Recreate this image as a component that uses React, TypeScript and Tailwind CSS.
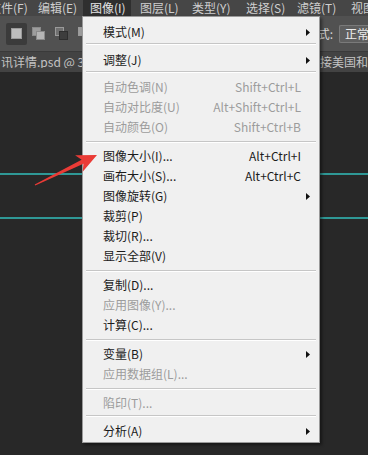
// Photoshop "图像" menu dropped open over the dark workspace, with a red
// pointer arrow marking 图像大小. Menu rows are 20px, separators 7-9px.

type Row =
  | { kind: "item"; label: string; shortcut?: string; sub?: boolean; off?: boolean }
  | { kind: "sep"; cls: string };

const rows: Row[] = [
  { kind: "item", label: "模式(M)", sub: true },
  { kind: "sep", cls: "h-[8px] pt-[1px]" },
  { kind: "item", label: "调整(J)", sub: true },
  { kind: "sep", cls: "h-[7px] pt-[1px]" },
  { kind: "item", label: "自动色调(N)", shortcut: "Shift+Ctrl+L", off: true },
  { kind: "item", label: "自动对比度(U)", shortcut: "Alt+Shift+Ctrl+L", off: true },
  { kind: "item", label: "自动颜色(O)", shortcut: "Shift+Ctrl+B", off: true },
  { kind: "sep", cls: "h-[9px] pt-[4px]" },
  { kind: "item", label: "图像大小(I)...", shortcut: "Alt+Ctrl+I" },
  { kind: "item", label: "画布大小(S)...", shortcut: "Alt+Ctrl+C" },
  { kind: "item", label: "图像旋转(G)", sub: true },
  { kind: "item", label: "裁剪(P)" },
  { kind: "item", label: "裁切(R)..." },
  { kind: "item", label: "显示全部(V)" },
  { kind: "sep", cls: "h-[9px] pt-[4px]" },
  { kind: "item", label: "复制(D)..." },
  { kind: "item", label: "应用图像(Y)...", off: true },
  { kind: "item", label: "计算(C)..." },
  { kind: "sep", cls: "h-[9px] pt-[4px]" },
  { kind: "item", label: "变量(B)", sub: true },
  { kind: "item", label: "应用数据组(L)...", off: true },
  { kind: "sep", cls: "h-[9px] pt-[4px]" },
  { kind: "item", label: "陷印(T)...", off: true },
  { kind: "sep", cls: "h-[8px] pt-[2px]" },
  { kind: "item", label: "分析(A)", sub: true },
];

function SubArrow() {
  return (
    <svg width="4" height="7" viewBox="0 0 4 7">
      <path d="M0 0L4 3.5L0 7Z" fill="#111" />
    </svg>
  );
}

export default function App() {
  return (
    <div className="relative flex h-[455px] w-[368px] flex-col overflow-hidden bg-[#282828] font-['Noto_Sans_CJK_SC',sans-serif] text-[12px] leading-none">
      {/* menu bar */}
      <div className="flex h-[16px] shrink-0 items-center overflow-hidden whitespace-nowrap bg-[#464646] text-[#cfcfcf]">
        <span className="ml-[-11px] w-[49px] shrink-0">文件(F)</span>
        <span className="w-[45px] shrink-0">编辑(E)</span>
        <span className="flex h-full w-[48px] shrink-0 items-center bg-[#2f2f2f] pl-[7px] text-[#e4e4e4]">图像(I)</span>
        <span className="w-[52px] shrink-0 pl-[9px]">图层(L)</span>
        <span className="w-[54px] shrink-0 pl-[9px]">类型(Y)</span>
        <span className="w-[51px] shrink-0 pl-[9px]">选择(S)</span>
        <span className="w-[54px] shrink-0 pl-[9px]">滤镜(T)</span>
        <span className="shrink-0 pl-[9px]">视图(V)</span>
      </div>

      {/* options toolbar */}
      <div className="flex h-[36px] shrink-0 items-center border-b border-[#3a3a3a] bg-[#515151] pl-[6px]">
        <div className="flex h-[22px] w-[21px] items-center justify-center rounded-[2px] bg-[#3b3b3b]">
          <div className="h-[11px] w-[11px] border border-[#9a9a9a] bg-[#bdbdbd]" />
        </div>
        <div className="ml-[5px] h-[13px] w-[14px]">
          <div className="h-[9px] w-[9px] border border-[#8a8a8a] bg-[#9d9d9d]" />
          <div className="-mt-[5px] ml-[4px] h-[9px] w-[9px] border border-[#8a8a8a] bg-[#b5b5b5]" />
        </div>
        <div className="ml-[9px] h-[13px] w-[14px]">
          <div className="h-[9px] w-[9px] border border-[#9a9a9a] bg-[#707070]" />
          <div className="-mt-[5px] ml-[4px] h-[9px] w-[9px] border border-[#2e2e2e] bg-[#3d3d3d]" />
        </div>
        <div className="ml-[9px] h-[13px] w-[14px]">
          <div className="h-[9px] w-[9px] border border-[#9a9a9a] bg-[#9d9d9d]" />
        </div>
        <div className="ml-auto flex items-center gap-[6px] whitespace-nowrap text-[#d6d6d6]">
          <span>模式:</span>
          <div className="flex h-[18px] w-[29px] items-center overflow-hidden rounded-l-[2px] border border-r-0 border-[#7a7a7a] bg-[#5f5f5f] pl-[5px] text-[#ececec]">
            正常
          </div>
        </div>
      </div>

      {/* document tab row */}
      <div className="flex h-[20px] shrink-0 items-center overflow-hidden whitespace-nowrap bg-[#434343] text-[#c4c4c4]">
        <span className="w-[320px] shrink-0 overflow-hidden pl-[1px]">讯详情.psd @ 33.3% (图层 1, RGB/8)</span>
        <span className="shrink-0">接美国和中国</span>
      </div>

      {/* canvas guides */}
      <div className="flex flex-1 flex-col">
        <div className="mt-[101px] h-[2px] bg-[#2f9896]" />
        <div className="mt-[42px] h-[2px] bg-[#2f9896]" />
      </div>

      {/* dropdown */}
      <div className="absolute left-[82px] top-[16px] flex h-[427px] w-[238px] flex-col border border-[#9a9a9a] bg-[#f0f0f0] pb-[1px] pt-[5px] shadow-[2px_2px_3px_rgba(0,0,0,0.45)]">
        {rows.map((r, i) =>
          r.kind === "sep" ? (
            <div key={i} className={r.cls}>
              <div className="mx-[3px] h-[1px] bg-[#c6c6c6]" />
              <div className="mx-[3px] h-[1px] bg-white" />
            </div>
          ) : (
            <div
              key={i}
              className={
                r.off
                  ? "flex h-[20px] shrink-0 items-center whitespace-nowrap pl-[20px] text-[#9c9c9c]"
                  : "flex h-[20px] shrink-0 items-center whitespace-nowrap pl-[20px] text-[#1b1b1b]"
              }
            >
              <span className="flex-1">{r.label}</span>
              {r.shortcut && <span>{r.shortcut}</span>}
              <span className="flex w-[18px] items-center pl-[5px]">{r.sub && <SubArrow />}</span>
            </div>
          ),
        )}
      </div>

      {/* red pointer arrow */}
      <svg className="absolute left-0 top-0" width="368" height="455" viewBox="0 0 368 455">
        <polygon
          points="34.75,184.5 81.6,159.8 75.1,155.3 97,155 82.7,171.7 83.4,163.8 35.25,185.5"
          fill="#ea3b36"
        />
      </svg>
    </div>
  );
}
